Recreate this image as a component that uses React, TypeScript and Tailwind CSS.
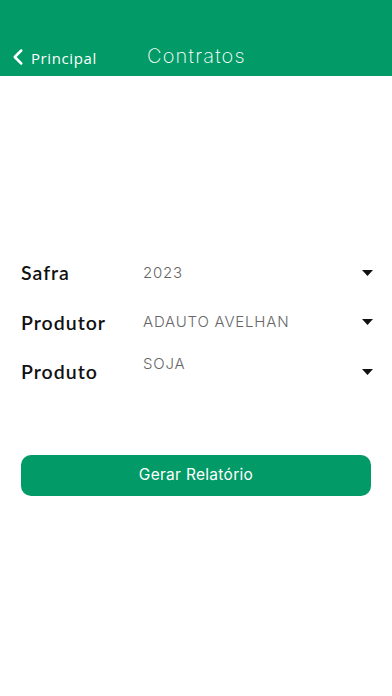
import React from 'react';
import { ChevronLeft } from 'lucide-react';

const fields = [
    { label: 'Safra', value: '2023', shift: '' },
    { label: 'Produtor', value: 'ADAUTO AVELHAN', shift: '' },
    { label: 'Produto', value: 'SOJA', shift: 'mb-[16px]' },
];

function Caret() {
    return (
        <svg width="11" height="6" viewBox="0 0 11 6" className="shrink-0">
            <path d="M0 0 L11 0 L5.5 6 Z" fill="#111" />
        </svg>
    );
}

export default function App() {
    const [sent, setSent] = React.useState(false);

    return (
        <div className="w-[392px] h-[696px] bg-white flex flex-col" style={{ fontFamily: '"Liberation Sans", Arial, sans-serif' }}>
            <header className="h-[76px] bg-[#029a66] flex items-end pb-[6px] text-white">
                <button className="flex items-center pl-[5px] w-[141px]">
                    <ChevronLeft size={26} strokeWidth={2.3} />
                    <span className="ml-[0px] text-[15px] tracking-[0.6px] pt-[3px]" style={{ fontFamily: '"Open Sans", sans-serif' }}>Principal</span>
                </button>
                <h1 className="ml-[6px] text-[20px] font-extralight tracking-[1.2px] leading-[28px]" style={{ fontFamily: 'Inter, sans-serif' }}>Contratos</h1>
            </header>

            <main className="flex-1 pt-[172px] px-[21px]">
                {fields.map(f => (
                    <div key={f.label} className="h-[49.5px] flex items-center">
                        <span className="w-[122px] text-[19.5px] font-semibold text-[#111] tracking-[1px]" style={{ fontFamily: 'Lato, sans-serif' }}>{f.label}</span>
                        <span className={`flex-1 text-[15px] font-light text-[#666] tracking-[0.8px] ${f.shift}`} style={{ fontFamily: 'Inter, sans-serif' }}>{f.value}</span>
                        <span className="mr-[-2px]"><Caret /></span>
                    </div>
                ))}

                <button onClick={() => setSent(s => !s)}
                    className="mt-[58px] w-full h-[41px] rounded-[10px] bg-[#029a66] text-white text-[15.5px] tracking-[0.3px]" style={{ fontFamily: 'Inter, sans-serif' }}>
                    {sent ? 'Gerando...' : 'Gerar Relatório'}
                </button>
            </main>
        </div>
    );
}
